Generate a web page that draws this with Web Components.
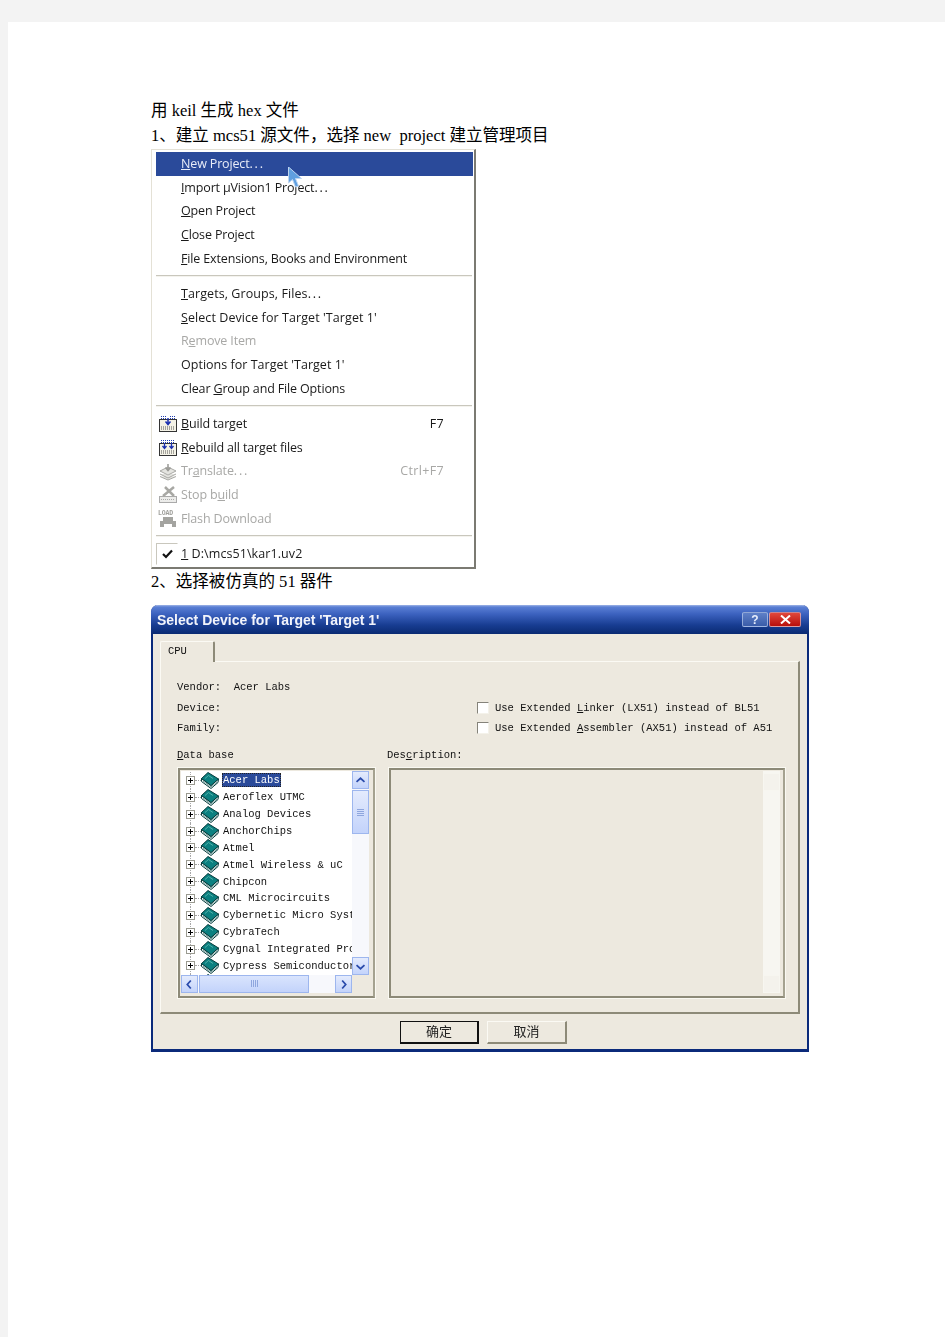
<!DOCTYPE html>
<html>
<head>
<meta charset="utf-8">
<style>
  html, body { margin: 0; padding: 0; background: #f3f3f3; }
  body { padding: 22px 0 0 8px; font-family: "Liberation Serif", "Noto Sans CJK SC", serif; }
</style>
</head>
<body>
<template id="book-svg">
  <svg width="18" height="17" viewBox="0 0 18 17" style="display:block">
    <path d="M0.5 6.5 L0.5 9.5 L10 16.5 L17 10.5 L17.5 7 L10 13.5 Z" fill="#f4fbfa" stroke="#063c3c"/>
    <path d="M0.5 6.5 L7 0.5 L17.5 7 L10 13.5 Z" fill="#0b8080" stroke="#063c3c"/>
    <path d="M4 6.5 L7.5 3.5 L12 6.5" fill="none" stroke="#4fb0a8"/>
    <path d="M2 9 L10 15 L16 10" fill="none" stroke="#6f9a98"/>
  </svg>
</template>

<script>
// every element below just sets its shadow html in the constructor
class DocPage extends HTMLElement {
  constructor() {
    super();
    this.attachShadow({ mode: "open" });
    this.shadowRoot.innerHTML = `<style>
      :host { display: block; background: #fff; min-height: 1315px; padding: 76px 0 0 143px; box-sizing: border-box; color: #000; }
    </style><slot></slot>`;
  }
}
class DocLine extends HTMLElement {
  constructor() {
    super();
    this.attachShadow({ mode: "open" });
    this.shadowRoot.innerHTML = `<style>
      :host { display: block; height: 25px; line-height: 25px; font-size: 16.55px; white-space: pre; }
    </style><slot></slot>`;
  }
}
class MenuPopup extends HTMLElement {
  constructor() {
    super();
    this.attachShadow({ mode: "open" });
    this.shadowRoot.innerHTML = `<style>
      :host { display: block; position: relative; width: 325px; height: 420px; box-sizing: border-box; margin-top: 1px;
        background: #fff; border: 1px solid #e4e1d6; border-right: 2px solid #7b7a72; border-bottom: 2px solid #7b7a72;
        padding: 2px 1px 0 4px; font-family: "Open Sans", "Liberation Sans", sans-serif; font-size: 12.5px; letter-spacing: -0.15px; filter: blur(0.25px); }
    </style><slot></slot>`;
  }
}
class MenuItem extends HTMLElement {
  constructor() {
    super();
    this.attachShadow({ mode: "open" });
    this.shadowRoot.innerHTML = `<style>
      :host { display: flex; align-items: center; height: 23.8px; color: #1a1a1a; white-space: nowrap; }
      :host([selected]) { background: #2a4a9a; color: #e8ecf8; }
      :host([disabled]) { color: #a8a8a6; }
      .ic { width: 25px; flex: none; display: flex; justify-content: flex-start; padding-left: 2px; box-sizing: border-box; }
      .lb { flex: 1; padding-bottom: 1.5px; }
      .k { margin-right: 29px; padding-bottom: 1.5px; letter-spacing: 0.35px; }
    </style><span class="ic"><slot name="icon"></slot></span><span class="lb"><slot></slot></span><span class="k"><slot name="key"></slot></span>`;
  }
}
class MenuSep extends HTMLElement {
  constructor() {
    super();
    this.attachShadow({ mode: "open" });
    this.shadowRoot.innerHTML = `<style>
      :host { display: block; height: 2px; margin: 4px 1px 5px 0; background: #c9c7bd; border-bottom: 1px solid #f4f3ee; box-sizing: border-box; }
    </style>`;
  }
}
class MenuDots extends HTMLElement {
  constructor() {
    super();
    this.attachShadow({ mode: "open" });
    this.shadowRoot.innerHTML = `<style>
      :host { letter-spacing: 1.8px; }
    </style>...`;
  }
}
class XpDialog extends HTMLElement {
  constructor() {
    super();
    this.attachShadow({ mode: "open" });
    this.shadowRoot.innerHTML = `<style>
      :host { display: block; width: 658px; height: 447px; box-sizing: border-box; margin-top: 11px;
        background: #ede9df; border: 2px solid #0b2a7a; border-top: 0; border-bottom-width: 3px; border-radius: 7px 7px 0 0;
        font-family: "Liberation Mono", "Noto Sans CJK SC", monospace; font-size: 10.5px; color: #111; filter: blur(0.25px); }
      .bar { height: 29px; margin: 0 -2px; border-radius: 7px 7px 0 0; display: flex; align-items: center; padding: 0 8px 0 6px;
        background: linear-gradient(#9fb4e6 0, #5a7fd4 2px, #3c62bf 9px, #183d92 20px, #0a2a72 29px); }
      .t { flex: 1; font: bold 14px "Liberation Sans", sans-serif; color: #f2f4fb; white-space: pre; }
      .btns { display: flex; gap: 1px; }
      .b { width: 26px; height: 15px; box-sizing: border-box; border: 1px solid rgba(215,228,250,.55); border-radius: 2px; display: flex; align-items: center; justify-content: center; color: #e8eefc; font: bold 12px "Liberation Sans", sans-serif; background: linear-gradient(#5f80c8, #3a5ca8); }
      .b.x { width: 32px; background: linear-gradient(#e0483c, #b80f0c); }
    </style>
    <div class="bar"><span class="t" id="t"></span><span class="btns"><span class="b">?</span><span class="b x"><svg width="11" height="9" viewBox="0 0 11 9"><path d="M1 0.5L10 8.5M10 0.5L1 8.5" stroke="#fff" stroke-width="2"/></svg></span></span></div>
    <slot></slot>`;
    this.shadowRoot.getElementById("t").textContent = this.getAttribute("title") || "Select Device for Target 'Target 1'";
  }
}
class TabPanel extends HTMLElement {
  constructor() {
    super();
    this.attachShadow({ mode: "open" });
    this.shadowRoot.innerHTML = `<style>
      :host { display: block; margin: 7px 7px 0 7px; }
      .tab { width: 55px; height: 21px; box-sizing: border-box; padding: 3px 0 0 7px; border: 1px solid #fbfaf4; border-bottom: 0; border-right: 2px solid #8d8a78; border-radius: 2px 2px 0 0; position: relative; z-index: 1; background: #ede9df; margin-bottom: -1px; }
      .body { height: 353px; box-sizing: border-box; border: 1px solid #fbfaf4; border-right: 2px solid #8d8a78; border-bottom: 2px solid #8d8a78; padding: 15px 13px 0 16px; }
    </style>
    <div class="tab">CPU</div><div class="body"><slot></slot></div>`;
  }
}
class InfoGrid extends HTMLElement {
  constructor() {
    super();
    this.attachShadow({ mode: "open" });
    this.shadowRoot.innerHTML = `<style>
      :host { display: grid; grid-template-columns: 300px 1fr; grid-auto-rows: 20.5px; align-items: center; white-space: pre; }
    </style><slot></slot>`;
  }
}
class XpCheck extends HTMLElement {
  constructor() {
    super();
    this.attachShadow({ mode: "open" });
    this.shadowRoot.innerHTML = `<style>
      :host { display: flex; align-items: center; gap: 6px; white-space: pre; }
      i { width: 12px; height: 12px; box-sizing: border-box; display: block; background: #fff; border: 1px solid #f4f2ea; border-top-color: #85837a; border-left-color: #85837a; }
    </style><i></i><span><slot></slot></span>`;
  }
}
class GroupRow extends HTMLElement {
  constructor() {
    super();
    this.attachShadow({ mode: "open" });
    this.shadowRoot.innerHTML = `<style>
      :host { display: grid; grid-template-columns: 198px 398px; gap: 12px; margin-top: 10px; }
    </style><slot></slot>`;
  }
}
class FieldBox extends HTMLElement {
  constructor() {
    super();
    this.attachShadow({ mode: "open" });
    this.shadowRoot.innerHTML = `<style>
      :host { display: block; }
      .l { height: 13px; line-height: 13px; margin-bottom: 6.5px; white-space: pre; }
      .box { height: 230px; box-sizing: border-box; margin-left: var(--box-l, 1px); border: 2px solid #8d8a78; border-right-color: #a5a290; box-shadow: 0 0 0 1px #faf9f2; padding: 1px var(--box-pr, 4px) 3px 1px; }
    </style><div class="l"><slot name="label"></slot></div><div class="box"><slot></slot></div>`;
  }
}
class DeviceTree extends HTMLElement {
  constructor() {
    super();
    this.attachShadow({ mode: "open" });
    this.shadowRoot.innerHTML = `<style>
      :host { display: grid; grid-template-columns: minmax(0, 1fr) 17px; grid-template-rows: minmax(0, 1fr) 18px; height: 100%; }
      .rows { overflow: hidden; padding: 1px 0 0 5px; background: #fff; }
      .v { display: flex; flex-direction: column; background: #f7f8fc; }
      .h { display: flex; background: #f7f8fc; }
      .thumbv { height: 44px; margin-top: 1px; }
      .sp { flex: 1; }
      .thumbh { width: 110px; margin-left: 1px; }
    </style>
    <div class="rows"><slot></slot></div>
    <div class="v"><xp-sbtn dir="up"></xp-sbtn><xp-sbtn class="thumbv" grip="v"></xp-sbtn><span class="sp"></span><xp-sbtn dir="down"></xp-sbtn></div>
    <div class="h"><xp-sbtn dir="left"></xp-sbtn><xp-sbtn class="thumbh" grip="h"></xp-sbtn><span class="sp"></span><xp-sbtn dir="right"></xp-sbtn></div>
    <span></span>`;
  }
}
class XpSbtn extends HTMLElement {
  constructor() {
    super();
    this.attachShadow({ mode: "open" });
    const dir = this.getAttribute("dir");
    const grip = this.getAttribute("grip");
    const paths = { up: "M4 10 L8.5 6 L13 10", down: "M4 7 L8.5 11 L13 7", left: "M10 4 L6 8.5 L10 13", right: "M7 4 L11 8.5 L7 13" };
    let inner = "";
    if (dir) inner = `<svg width="17" height="17" viewBox="0 0 17 17" style="display:block"><path d="${paths[dir]}" fill="none" stroke="${this.hasAttribute('off') ? '#c8c6bc' : '#2a4bab'}" stroke-width="2"/></svg>`;
    if (grip == "v") inner = `<svg width="8" height="8" viewBox="0 0 8 8"><path d="M0 1.5H7M0 3.5H7M0 5.5H7M0 7.5H7" stroke="#8ea6de"/></svg>`;
    if (grip == "h") inner = `<svg width="8" height="8" viewBox="0 0 8 8"><path d="M1.5 0V7M3.5 0V7M5.5 0V7M7.5 0V7" stroke="#8ea6de"/></svg>`;
    this.shadowRoot.innerHTML = `<style>
      :host { display: flex; align-items: center; justify-content: center; flex: none; width: 17px; height: 18px; box-sizing: border-box;
        background: linear-gradient(#e4ebfd, #c3d3fb); border: 1px solid #9db6ee; }
      :host([grip="h"]) { background: linear-gradient(#d9e4fd, #c3d3fb); }
      :host([off]) { background: #f4f2ec; border-color: #f7f6f0; }
    </style>${inner}`;
  }
}
class TreeRow extends HTMLElement {
  constructor() {
    super();
    this.attachShadow({ mode: "open" });
    this.shadowRoot.innerHTML = `<style>
      :host { display: flex; align-items: center; height: 16.87px; position: relative; }
      .vl { position: absolute; left: 4px; top: 0; bottom: 0; border-left: 1px dotted #a8a8a8; }
      .pm { width: 9px; height: 9px; flex: none; box-sizing: border-box; border: 1px solid #9a9a90; background: #fff; position: relative; }
      .pm::before { content: ""; position: absolute; left: 1px; right: 1px; top: 3px; height: 1px; background: #000; }
      .pm::after { content: ""; position: absolute; top: 1px; bottom: 1px; left: 3px; width: 1px; background: #000; }
      .dots { width: 6px; flex: none; border-top: 1px dotted #a0a0a0; }
      .bk { flex: none; margin-right: 3px; }
      .tx { padding: 0 1px; height: 14px; line-height: 14px; flex: none; white-space: pre; }
      :host([selected]) .tx { background: #2a4a9a; color: #fff; outline: 1px dotted #222; outline-offset: -1px; }
    </style><span class="vl"></span><span class="pm"></span><span class="dots"></span><span class="bk" id="b"></span><span class="tx"><slot></slot></span>`;
    this.shadowRoot.getElementById("b").appendChild(document.getElementById("book-svg").content.cloneNode(true));
  }
}
class XpButton extends HTMLElement {
  constructor() {
    super();
    this.attachShadow({ mode: "open" });
    this.shadowRoot.innerHTML = `<style>
      :host { display: flex; align-items: center; justify-content: center; width: 80px; height: 23px; box-sizing: border-box; background: #ede9df; padding-bottom: 3px;
        border: 1px solid #fbfaf4; border-right: 2px solid #8d8a78; border-bottom: 2px solid #8d8a78; font: 13px "Noto Sans CJK SC", sans-serif; color: #222; }
      :host([def]) { width: 79px; border: 1px solid #111; border-right-width: 2px; border-bottom-width: 2px; }
    </style><slot></slot>`;
  }
}
class ButtonRow extends HTMLElement {
  constructor() {
    super();
    this.attachShadow({ mode: "open" });
    this.shadowRoot.innerHTML = `<style>
      :host { display: flex; gap: 8px; padding: 7px 0 0 247px; }
    </style><slot></slot>`;
  }
}
for (const [n, c] of [["doc-page", DocPage], ["doc-line", DocLine], ["menu-popup", MenuPopup], ["menu-item", MenuItem], ["menu-sep", MenuSep], ["menu-dots", MenuDots],
  ["xp-dialog", XpDialog], ["tab-panel", TabPanel], ["info-grid", InfoGrid], ["xp-check", XpCheck], ["group-row", GroupRow], ["field-box", FieldBox],
  ["device-tree", DeviceTree], ["xp-sbtn", XpSbtn], ["tree-row", TreeRow], ["xp-button", XpButton], ["button-row", ButtonRow]]) {
  customElements.define(n, c);
}
</script>

<doc-page>
  <doc-line>用 keil 生成 hex 文件</doc-line>
  <doc-line>1、建立 mcs51 源文件，选择 new  project 建立管理项目</doc-line>
  <menu-popup>
    <menu-item selected style="height:24px"><span><u>N</u>ew Project<menu-dots></menu-dots></span></menu-item>
    <menu-item><span><u>I</u>mport µVision1 Project<menu-dots></menu-dots></span></menu-item>
    <menu-item><u>O</u>pen Project</menu-item>
    <menu-item><u>C</u>lose Project</menu-item>
    <menu-item><u>F</u>ile Extensions, Books and Environment</menu-item>
    <menu-sep></menu-sep>
    <menu-item><span style="letter-spacing:.08px"><u>T</u>argets, Groups, Files<menu-dots></menu-dots></span></menu-item>
    <menu-item><span style="letter-spacing:.08px"><u>S</u>elect Device for Target 'Target 1'</span></menu-item>
    <menu-item disabled>R<u>e</u>move Item</menu-item>
    <menu-item><span style="letter-spacing:.02px">Options for Target 'Target 1'</span></menu-item>
    <menu-item>Clear <u>G</u>roup and File Options</menu-item>
    <menu-sep></menu-sep>
    <menu-item>
      <svg slot="icon" width="20" height="18" viewBox="0 0 20 18"><rect x="1.5" y="4.5" width="17" height="12" fill="#f4f2e6" stroke="#333"/><path d="M3 1.5H8M12 1.5H17M3 3.5H8M12 3.5H17" stroke="#223fb0" stroke-dasharray="1 1"/><path d="M10 3V9M7.5 6.5L10 9.5L12.5 6.5" stroke="#1a2fb0" fill="none" stroke-width="1.5"/><path d="M3 12H17M3 14H17" stroke="#555" stroke-dasharray="1 1"/></svg>
      <u>B</u>uild target<span slot="key">F7</span>
    </menu-item>
    <menu-item>
      <svg slot="icon" width="20" height="18" viewBox="0 0 20 18"><rect x="1.5" y="4.5" width="17" height="12" fill="#f4f2e6" stroke="#333"/><path d="M3 1.5H17M3 3.5H17" stroke="#223fb0" stroke-dasharray="1 1"/><path d="M6.5 4V9M4.5 7L6.5 9.5L8.5 7M13.5 4V9M11.5 7L13.5 9.5L15.5 7" stroke="#1a2fb0" fill="none" stroke-width="1.3"/><path d="M3 12H17M3 14H17" stroke="#555" stroke-dasharray="1 1"/></svg>
      <u>R</u>ebuild all target files
    </menu-item>
    <menu-item disabled>
      <svg slot="icon" width="20" height="18" viewBox="0 0 20 18"><path d="M2 8L10 4L18 8L10 12ZM2 11L10 15L18 11M2 13.5L10 17L18 13.5" fill="#e4e4e0" stroke="#a9a9a5"/><path d="M10 1V7M7.5 4.5L10 7.5L12.5 4.5" stroke="#9a9a96" fill="none" stroke-width="1.5"/></svg>
      <span>Tr<u>a</u>nslate<menu-dots></menu-dots></span><span slot="key">Ctrl+F7</span>
    </menu-item>
    <menu-item disabled>
      <svg slot="icon" width="20" height="18" viewBox="0 0 20 18"><rect x="1.5" y="10.5" width="17" height="6" fill="#ececea" stroke="#aaa"/><path d="M3 13.5H17" stroke="#aaa" stroke-dasharray="1 1"/><path d="M5 10L16 1M7 1L16 10" stroke="#a8a8a4" stroke-width="2.5"/></svg>
      Stop b<u>u</u>ild
    </menu-item>
    <menu-item disabled>
      <svg slot="icon" width="20" height="20" viewBox="0 0 20 20"><text x="0" y="6" font-family="Liberation Mono" font-size="6.5" font-weight="bold" fill="#a0a09c">LOAD</text><path d="M5 8H15V12H18V18H14V15H6V18H2V12H5Z" fill="#a4a4a0"/></svg>
      Flash Download
    </menu-item>
    <menu-sep></menu-sep>
    <menu-item>
      <span slot="icon" style="display:flex;align-items:center;justify-content:center;width:22px;height:22px;margin-left:-2px;border:1px solid #c9c7bd;border-right-color:#fff;border-bottom-color:#fff;box-sizing:border-box"><svg width="11" height="10" viewBox="0 0 11 10"><path d="M1 5L4 8L10 1.5" fill="none" stroke="#111" stroke-width="2.2"/></svg></span>
      <span style="letter-spacing:.08px"><u>1</u> D:\mcs51\kar1.uv2</span>
    </menu-item>
    <svg style="position:absolute;left:136px;top:17px" width="15" height="22" viewBox="0 0 15 22"><path d="M0.5 0L0.5 16L4.5 12.5L7.5 20L10.5 19L7.5 11.5L13.5 11.5Z" fill="#5f9fe0" stroke="#bcd4f0" stroke-width="1"/></svg>
  </menu-popup>
  <doc-line>2、选择被仿真的 51 器件</doc-line>
  <xp-dialog>
    <tab-panel>
      <info-grid>
        <span>Vendor:  Acer Labs</span><span></span>
        <span>Device:</span><xp-check>Use Extended <u>L</u>inker (LX51) instead of BL51</xp-check>
        <span>Family:</span><xp-check>Use Extended <u>A</u>ssembler (AX51) instead of A51</xp-check>
      </info-grid>
      <group-row>
        <field-box>
          <span slot="label"><u>D</u>ata base</span>
          <device-tree>
            <tree-row selected>Acer Labs</tree-row>
            <tree-row>Aeroflex UTMC</tree-row>
            <tree-row>Analog Devices</tree-row>
            <tree-row>AnchorChips</tree-row>
            <tree-row>Atmel</tree-row>
            <tree-row>Atmel Wireless &amp; uC</tree-row>
            <tree-row>Chipcon</tree-row>
            <tree-row>CML Microcircuits</tree-row>
            <tree-row>Cybernetic Micro Systems</tree-row>
            <tree-row>CybraTech</tree-row>
            <tree-row>Cygnal Integrated Products</tree-row>
            <tree-row>Cypress Semiconductor</tree-row>
            <tree-row></tree-row>
          </device-tree>
        </field-box>
        <field-box style="--box-l:2px;--box-pr:3px">
          <span slot="label">Des<u>c</u>ription:</span>
          <div style="display:flex;justify-content:flex-end;height:100%">
            <div style="width:17px;display:flex;flex-direction:column;justify-content:space-between;background:#f7f6f1;padding-top:2px;box-sizing:border-box"><xp-sbtn dir="up" off></xp-sbtn><xp-sbtn dir="down" off></xp-sbtn></div>
          </div>
        </field-box>
      </group-row>
    </tab-panel>
    <button-row>
      <xp-button def>确定</xp-button>
      <xp-button>取消</xp-button>
    </button-row>
  </xp-dialog>
</doc-page>
</body>
</html>
